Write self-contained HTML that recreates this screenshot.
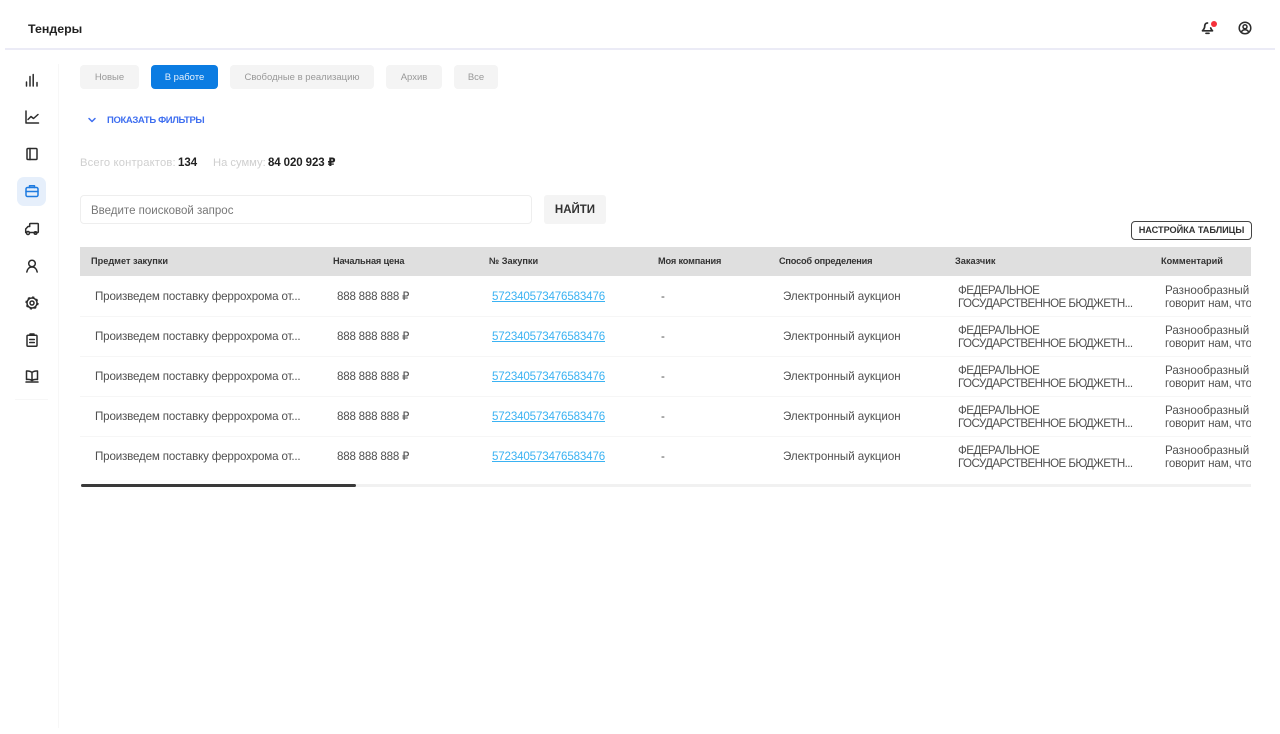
<!DOCTYPE html>
<html lang="ru"><head><meta charset="utf-8"><title>Тендеры</title>
<style>
*{box-sizing:border-box;margin:0;padding:0}
html,body{width:1280px;height:734px;overflow:hidden;background:#fff;font-family:"Liberation Sans","DejaVu Sans",sans-serif}
#p{position:relative;width:1280px;height:734px;overflow:hidden;filter:blur(.35px)}
.a,.t,.c{position:absolute;white-space:nowrap}
.t{height:14px;line-height:14px}
.tab{position:absolute;top:65px;height:24px;line-height:25px;background:#f4f4f4;border-radius:4px;text-align:center;font-size:9.5px;color:#999}
.th{position:absolute;top:254px;height:14px;line-height:14px;font-size:9.2px;font-weight:bold;color:#333;white-space:nowrap}
.r{position:absolute;left:0;width:1280px;height:40px}
.c{height:14px;line-height:14px;font-size:11.6px;color:#505050}
.c a{color:#3ab2f2;text-decoration:underline}
.s1{left:95px;top:14px;letter-spacing:-.17px}
.s2{left:337px;top:14px;letter-spacing:-.22px}
.s3{left:492px;top:14px;letter-spacing:-.17px}
.s4{left:661px;top:14px}
.s5{left:783px;top:14px;letter-spacing:-.05px}
.s6{left:958px;top:8px;letter-spacing:-.55px}
.s7{left:958px;top:21px;letter-spacing:-.6px}
.s8{left:1165px;top:8px;width:86px;overflow:hidden}
.s9{left:1165px;top:21px;width:86px;overflow:hidden;letter-spacing:-.15px}
.i{position:absolute;left:24px;width:16px;height:16px;fill:none;stroke:#2c2c2c;stroke-width:1.5;stroke-linecap:round;stroke-linejoin:round}
.sep{position:absolute;left:80px;width:1171px;height:1px;background:#f6f6f6}
</style></head><body><div id="p">
<div class="a" style="left:5px;top:48px;width:1270px;height:2px;background:#ebebf6"></div>
<div class="t" style="left:28px;top:22px;font-size:12.4px;font-weight:bold;color:#222">Тендеры</div>
<svg class="a" style="left:1200px;top:20px" width="16" height="16" viewBox="0 0 16 16" fill="none" stroke="#2c2c2c" stroke-width="1.7" stroke-linecap="round" stroke-linejoin="round"><path d="M7.500 3C5.500 3 4.700 4.500 4.700 6.500C4.700 8.500 3.500 9.500 2.500 10.800H12.500C11.800 10 11 9.300 10.700 8"/><path d="M6 13.300H9"/></svg>
<div class="a" style="left:1211px;top:21px;width:6px;height:6px;border-radius:50%;background:#f5303a"></div>
<svg class="a" style="left:1237px;top:20px" width="16" height="16" viewBox="0 0 16 16" fill="none" stroke="#2c2c2c" stroke-width="1.5"><circle cx="8" cy="8" r="5.800"/><circle cx="8" cy="6.800" r="2"/><path d="M4.300 12.300C5 10.500 6.300 9.800 8 9.800S11 10.500 11.700 12.300"/></svg>

<div class="a" style="left:58px;top:64px;width:1px;height:664px;background:#f7f7f7"></div>
<div class="a" style="left:15px;top:399px;width:33px;height:1px;background:#f7f7f7"></div>
<div class="a" style="left:17px;top:177px;width:29px;height:29px;border-radius:7px;background:#e6effb"></div>
<svg class="i" style="top:72px" viewBox="0 0 16 16"><path d="M2.500 10V14M6 4.500V14M9.200 2.500V14M13 10.500V14"/></svg>
<svg class="i" style="top:109px" viewBox="0 0 16 16"><path d="M2 2V14H14.500M4 10.500L7 7.500L9.500 9.500L14 5.500"/></svg>
<svg class="i" style="top:146px" viewBox="0 0 16 16"><rect x="3" y="2.500" width="10" height="11" rx="1"/><path d="M6 2.500V13.500"/></svg>
<svg class="i" style="top:183px;stroke:#1f7be0" viewBox="0 0 16 16"><rect x="2" y="4.500" width="12" height="9" rx="1.500"/><path d="M5.500 4.500V2.800H10.500V4.500M2 8.500H14"/></svg>
<svg class="i" style="top:221px" viewBox="0 0 16 16"><path d="M5.500 11.500H10.500H13.500C14 11.500 14.300 11.200 14.300 10.700V3.300C14.300 2.800 14 2.500 13.500 2.500H6.500C6 2.500 5.700 2.800 5.700 3.300V5.500H4L1.700 8V11.500H2.500"/><circle cx="4" cy="12" r="1.500"/><circle cx="11.500" cy="12" r="1.300"/></svg>
<svg class="i" style="top:258px" viewBox="0 0 16 16"><circle cx="8" cy="5.500" r="3.300"/><path d="M2.800 14C3.300 11 5.200 9 8 9S12.700 11 13.200 14"/></svg>
<svg class="i" style="top:295px" viewBox="0 0 16 16"><circle cx="8" cy="8" r="5"/><circle cx="8" cy="8" r="2"/><circle cx="8" cy="8" r="6" stroke-width="1.300" stroke-dasharray="2.200 2.510" stroke-linecap="butt"/></svg>
<svg class="i" style="top:332px" viewBox="0 0 16 16"><rect x="3" y="3.200" width="10" height="11" rx="1"/><path d="M6 3.200V2H10V3.200M5.700 7.500H10.300M5.700 10.500H10.300"/></svg>
<svg class="i" style="top:368px" viewBox="0 0 16 16"><path d="M8 4.500C6.500 3 4.500 2.800 2.500 3V11.500C4.500 11.300 6.500 11.500 8 12.500C9.500 11.500 11.500 11.300 13.500 11.500V3C11.500 2.800 9.500 3 8 4.500ZM8 4.500V12.500M2 14H14"/></svg>

<div class="tab" style="left:80px;width:59px">Новые</div>
<div class="tab" style="left:151px;width:67px;background:#0b7ce2;color:#e4f0fc">В работе</div>
<div class="tab" style="left:230px;width:144px">Свободные в реализацию</div>
<div class="tab" style="left:386px;width:56px">Архив</div>
<div class="tab" style="left:454px;width:44px">Все</div>

<svg class="a" style="left:87px;top:116px" width="10" height="8" viewBox="0 0 10 8" fill="none" stroke="#3f6ff0" stroke-width="1.500" stroke-linecap="round" stroke-linejoin="round"><path d="M2 2.500L5 5.500L8 2.500"/></svg>
<div class="t" style="left:107px;top:114px;font-size:9.5px;font-weight:bold;letter-spacing:-.38px;color:#3f6ff0">ПОКАЗАТЬ ФИЛЬТРЫ</div>

<div class="t" style="left:80px;top:156px;font-size:11.2px;letter-spacing:.18px;color:#cfcfcf">Всего контрактов:</div>
<div class="t" style="left:178px;top:156px;font-size:11.5px;font-weight:bold;color:#222">134</div>
<div class="t" style="left:213px;top:156px;font-size:11.2px;color:#cfcfcf">На сумму:</div>
<div class="t" style="left:268px;top:156px;font-size:11.5px;font-weight:bold;letter-spacing:-.1px;color:#222">84 020 923 ₽</div>

<div class="a" style="left:80px;top:195px;width:452px;height:29px;border:1px solid #eeeeee;border-radius:4px"></div>
<div class="t" style="left:91px;top:204px;font-size:11.5px;color:#777">Введите поисковой запрос</div>
<div class="a" style="left:544px;top:195px;width:62px;height:29px;line-height:30px;background:#f4f4f4;border-radius:3px;text-align:center;font-size:11.5px;font-weight:bold;color:#333">НАЙТИ</div>
<div class="a" style="left:1131px;top:221px;width:121px;height:19px;line-height:17px;border:1px solid #444;border-radius:4px;text-align:center;font-size:9.2px;font-weight:bold;letter-spacing:-.05px;color:#333">НАСТРОЙКА ТАБЛИЦЫ</div>

<div class="a" style="left:80px;top:247px;width:1171px;height:29px;background:#dfdfdf"></div>
<div class="th" style="left:91px">Предмет закупки</div>
<div class="th" style="left:333px;letter-spacing:-.15px">Начальная цена</div>
<div class="th" style="left:489px">№ Закупки</div>
<div class="th" style="left:658px;letter-spacing:-.15px">Моя компания</div>
<div class="th" style="left:779px;letter-spacing:-.2px">Способ определения</div>
<div class="th" style="left:955px">Заказчик</div>
<div class="th" style="left:1161px">Комментарий</div>

<div class="sep" style="top:316px"></div><div class="sep" style="top:356px"></div><div class="sep" style="top:396px"></div><div class="sep" style="top:436px"></div>

<div class="r" style="top:276px"><div class="c s1">Произведем поставку феррохрома от...</div><div class="c s2">888 888 888 ₽</div><div class="c s3"><a>572340573476583476</a></div><div class="c s4">-</div><div class="c s5">Электронный аукцион</div><div class="c s6">ФЕДЕРАЛЬНОЕ</div><div class="c s7">ГОСУДАРСТВЕННОЕ БЮДЖЕТН...</div><div class="c s8">Разнообразный и</div><div class="c s9">говорит нам, что</div></div>
<div class="r" style="top:316px"><div class="c s1">Произведем поставку феррохрома от...</div><div class="c s2">888 888 888 ₽</div><div class="c s3"><a>572340573476583476</a></div><div class="c s4">-</div><div class="c s5">Электронный аукцион</div><div class="c s6">ФЕДЕРАЛЬНОЕ</div><div class="c s7">ГОСУДАРСТВЕННОЕ БЮДЖЕТН...</div><div class="c s8">Разнообразный и</div><div class="c s9">говорит нам, что</div></div>
<div class="r" style="top:356px"><div class="c s1">Произведем поставку феррохрома от...</div><div class="c s2">888 888 888 ₽</div><div class="c s3"><a>572340573476583476</a></div><div class="c s4">-</div><div class="c s5">Электронный аукцион</div><div class="c s6">ФЕДЕРАЛЬНОЕ</div><div class="c s7">ГОСУДАРСТВЕННОЕ БЮДЖЕТН...</div><div class="c s8">Разнообразный и</div><div class="c s9">говорит нам, что</div></div>
<div class="r" style="top:396px"><div class="c s1">Произведем поставку феррохрома от...</div><div class="c s2">888 888 888 ₽</div><div class="c s3"><a>572340573476583476</a></div><div class="c s4">-</div><div class="c s5">Электронный аукцион</div><div class="c s6">ФЕДЕРАЛЬНОЕ</div><div class="c s7">ГОСУДАРСТВЕННОЕ БЮДЖЕТН...</div><div class="c s8">Разнообразный и</div><div class="c s9">говорит нам, что</div></div>
<div class="r" style="top:436px"><div class="c s1">Произведем поставку феррохрома от...</div><div class="c s2">888 888 888 ₽</div><div class="c s3"><a>572340573476583476</a></div><div class="c s4">-</div><div class="c s5">Электронный аукцион</div><div class="c s6">ФЕДЕРАЛЬНОЕ</div><div class="c s7">ГОСУДАРСТВЕННОЕ БЮДЖЕТН...</div><div class="c s8">Разнообразный и</div><div class="c s9">говорит нам, что</div></div>

<div class="a" style="left:81px;top:484px;width:1170px;height:3px;background:#f1f1f1"></div>
<div class="a" style="left:81px;top:484px;width:275px;height:3px;background:#3a3a3a;border-radius:2px"></div>
</div></body></html>
